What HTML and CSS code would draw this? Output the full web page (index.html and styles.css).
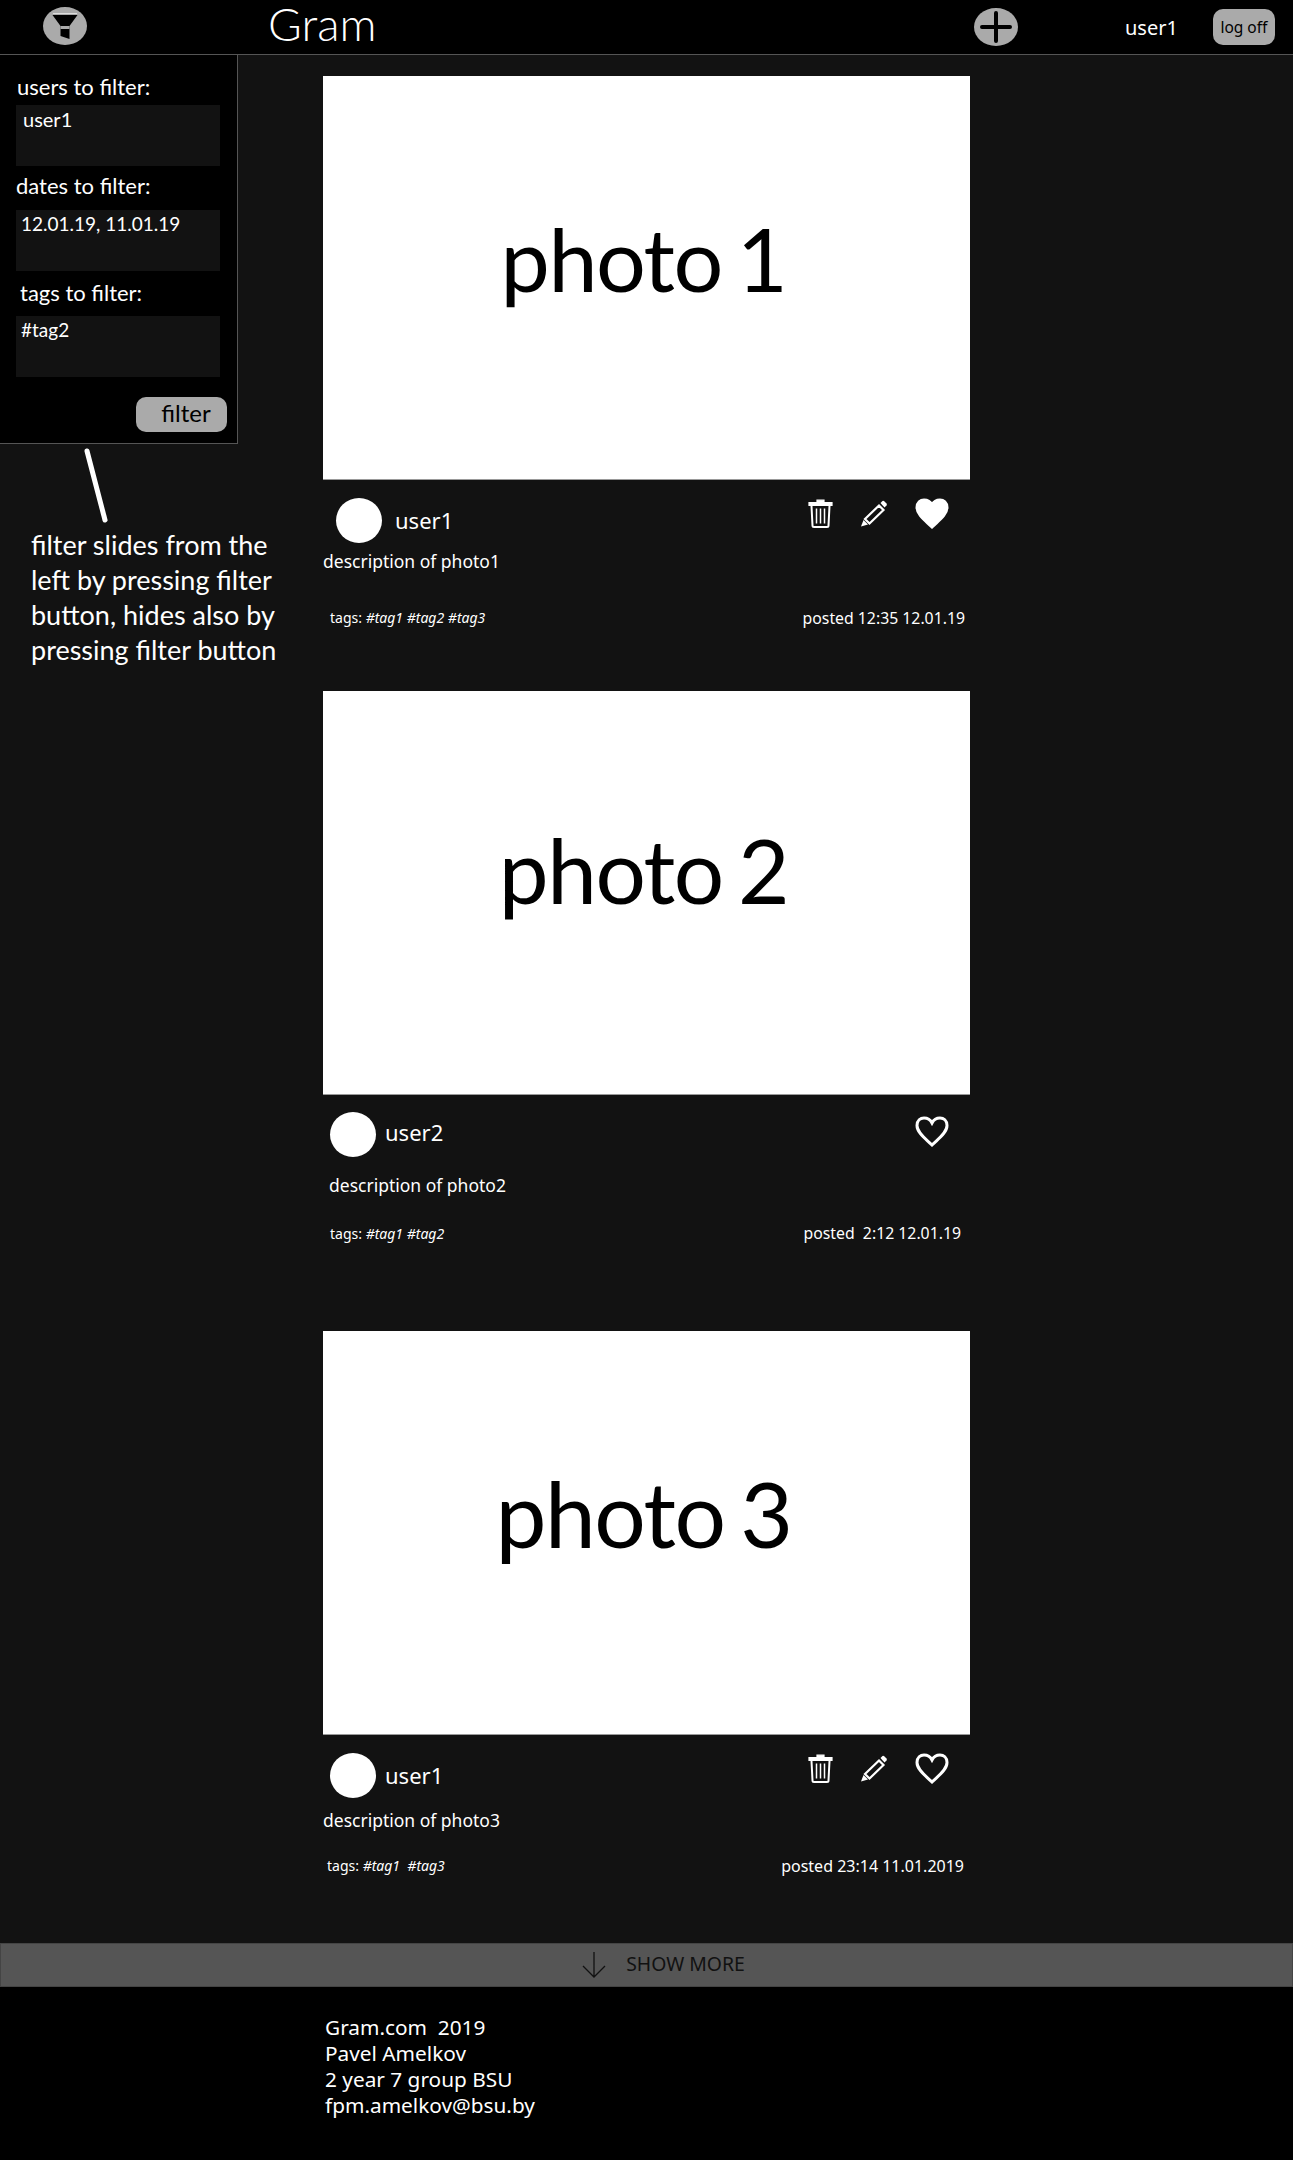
FILE: index.html
```html
<!DOCTYPE html>
<html lang="en">
<head>
  <meta charset="UTF-8" />
  <meta name="viewport" content="width=device-width, initial-scale=1.0" />
  <title>Gram</title>
  <link rel="stylesheet" href="styles.css">
</head>
<body>
  <svg class="sprites" width="0" height="0">
    <symbol id="trash" viewBox="0 0 25 29">
      <path d="M9 3V1.200h7V3M1 3.500h23v3H1z" fill="#fff" stroke="#fff" stroke-width="1.200" />
      <path d="M3.500 7l1 19.500q0 1.500 1.500 1.500h13q1.500 0 1.500-1.500l1-19.500" fill="none" stroke="#fff" stroke-width="2" />
      <path d="M8.500 9.500v15M12.500 9.500v15M16.500 9.500v15" fill="none" stroke="#fff" stroke-width="1.500" />
    </symbol>
    <symbol id="pencil" viewBox="0 0 28 27">
      <path d="M20.500 3l2-2q1-.5 2 .5l2 2q.8 1 0 2l-2 2z" fill="#fff" />
      <path d="M19 5.500l4.500 4.500L9.500 23.500 5 19z" fill="none" stroke="#fff" stroke-width="2.200" />
      <path d="M3.500 20l4.500 4.500L1 26.500z" fill="#fff" />
    </symbol>
    <symbol id="heart" viewBox="0 0 34 31">
      <path d="M17 29C11 23 2 17 2 9.500 2 4.500 5.500 2 9 2c3.500 0 6.500 2 8 5 1.500-3 4.500-5 8-5 3.500 0 7 2.500 7 7.500C32 17 23 23 17 29z" />
    </symbol>
  </svg>

  <header class="topbar">
    <button class="round-btn filter-toggle">
      <svg width="44" height="38" viewBox="0 0 44 38">
        <path d="M10 6.500h24" stroke="#ddd" stroke-width="1" />
        <path d="M9.500 8h25L26.500 19v13l-9-3V19z" fill="#000" />
        <path d="M17.500 19h9v3h-9z" fill="#aaa" />
      </svg>
    </button>
    <span class="logo">Gram</span>
    <button class="round-btn add-btn">
      <svg width="44" height="38" viewBox="0 0 44 38">
        <path d="M22 5v28M8 19h28" stroke="#000" stroke-width="4" stroke-linecap="round" />
      </svg>
    </button>
    <span class="current-user">user1</span>
    <button class="logoff-btn">log off</button>
  </header>

  <aside class="filter-side">
    <div class="filter-panel">
      <label class="filter-label">users to filter:</label>
      <div class="filter-input filter-input-users">user1</div>
      <label class="filter-label filter-label-dates">dates to filter:</label>
      <div class="filter-input filter-input-dates">12.01.19, 11.01.19</div>
      <label class="filter-label filter-label-tags">tags to filter:</label>
      <div class="filter-input filter-input-tags">#tag2</div>
      <button class="filter-submit">filter</button>
    </div>
    <svg class="note-line" width="30" height="80" viewBox="0 0 30 80">
      <path d="M7 3l18 69" stroke="#fff" stroke-width="5" stroke-linecap="round" />
    </svg>
    <p class="note">filter slides from the left by pressing filter button, hides also by pressing filter button</p>
  </aside>

  <main class="feed">
    <article class="post post-first">
      <div class="photo">photo 1</div>
      <div class="post-head">
        <div class="post-user"><span class="avatar"></span><span class="username">user1</span></div>
        <div class="actions">
          <svg class="icon-trash"><use href="#trash" /></svg>
          <svg class="icon-pencil"><use href="#pencil" /></svg>
          <svg class="icon-heart liked"><use href="#heart" /></svg>
        </div>
      </div>
      <p class="description">description of photo1</p>
      <div class="post-foot">
        <span class="tags">tags: <i>#tag1 #tag2 #tag3</i></span>
        <span class="posted">posted 12:35 12.01.19</span>
      </div>
    </article>

    <article class="post post-second">
      <div class="photo">photo 2</div>
      <div class="post-head">
        <div class="post-user"><span class="avatar"></span><span class="username">user2</span></div>
        <div class="actions">
          <svg class="icon-heart"><use href="#heart" /></svg>
        </div>
      </div>
      <p class="description">description of photo2</p>
      <div class="post-foot">
        <span class="tags">tags: <i>#tag1 #tag2</i></span>
        <span class="posted">posted &nbsp;2:12 12.01.19</span>
      </div>
    </article>

    <article class="post post-third">
      <div class="photo">photo 3</div>
      <div class="post-head">
        <div class="post-user"><span class="avatar"></span><span class="username">user1</span></div>
        <div class="actions">
          <svg class="icon-trash"><use href="#trash" /></svg>
          <svg class="icon-pencil"><use href="#pencil" /></svg>
          <svg class="icon-heart"><use href="#heart" /></svg>
        </div>
      </div>
      <p class="description">description of photo3</p>
      <div class="post-foot">
        <span class="tags">tags: <i>#tag1 &nbsp;#tag3</i></span>
        <span class="posted">posted 23:14 11.01.2019</span>
      </div>
    </article>
  </main>

  <button class="show-more">
    <svg width="26" height="28" viewBox="0 0 26 28">
      <path d="M13 1v25M2 15l11 11 11-11" fill="none" stroke="#111" stroke-width="1.300" />
    </svg>
    <span class="show-more-text">SHOW MORE</span>
  </button>

  <footer class="footer">
    <div>Gram.com &nbsp;2019</div>
    <div>Pavel Amelkov</div>
    <div>2 year 7 group BSU</div>
    <div>fpm.amelkov@bsu.by</div>
  </footer>
</body>
</html>
```

FILE: styles.css
```css
* {
  box-sizing: border-box;
}
body {
  margin: 0;
  min-height: 2160px;
  display: flex;
  flex-direction: column;
  position: relative;
  font-family: "Noto Sans", sans-serif;
  background-color: #121212;
  color: #fff;
}
button {
  font-family: inherit;
  border: none;
  padding: 0;
}
.sprites {
  position: absolute;
}

.topbar {
  height: 55px;
  display: flex;
  align-items: center;
  background-color: #000;
  border-bottom: 1px solid #555;
}
.round-btn {
  width: 44px;
  height: 38px;
  border-radius: 50%;
  background-color: #aaa;
  display: flex;
}
.filter-toggle {
  margin-left: 43px;
  margin-top: -3px;
}
.logo {
  width: 110px;
  margin-left: 181px;
  font-family: Lato, sans-serif;
  font-weight: 300;
  font-size: 46px;
  line-height: 46px;
  margin-top: -7px;
}
.add-btn {
  margin-left: 596px;
  margin-top: -1px;
}
.current-user {
  margin-left: 107px;
  font-size: 20px;
}
.logoff-btn {
  margin-left: 35px;
  width: 62px;
  height: 36px;
  border-radius: 10px;
  background-color: #aaa;
  color: #000;
  font-size: 15.500px;
}

.filter-side {
  position: absolute;
  left: 0;
  top: 55px;
  width: 290px;
  font-family: Lato, sans-serif;
}
.filter-panel {
  width: 238px;
  height: 389px;
  padding: 18px 10px 0 16px;
  background-color: #000;
  border-right: 1px solid #555;
  border-bottom: 1px solid #555;
  display: flex;
  flex-direction: column;
}
.filter-label {
  font-size: 22px;
  line-height: 28px;
  margin-left: 1px;
}
.filter-label-dates {
  margin: 6px 0 10px;
}
.filter-label-tags {
  margin: 8px 0 9px 4px;
}
.filter-input {
  width: 204px;
  height: 61px;
  padding: 1px 6px;
  background-color: #121212;
  font-size: 19px;
  line-height: 26px;
}
.filter-input-users {
  margin-top: 4px;
  padding-left: 7px;
  font-size: 20px;
}
.filter-input-dates {
  padding-left: 5px;
}
.filter-input-tags {
  padding-left: 5px;
}
.filter-submit {
  align-self: flex-end;
  margin-top: 20px;
  width: 91px;
  height: 35px;
  padding: 0 0 4px 9px;
  border-radius: 10px;
  background-color: #aaa;
  color: #000;
  font-family: Lato, sans-serif;
  font-size: 24px;
}
.note-line {
  display: block;
  margin: 4px 0 0 80px;
}
.note {
  margin: -1px 0 0 31px;
  width: 255px;
  font-size: 27px;
  line-height: 35px;
}

.feed {
  margin-left: 323px;
  width: 647px;
  padding-top: 21px;
}
.photo {
  height: 404px;
  padding: 0 6px 40px 0;
  display: flex;
  align-items: center;
  justify-content: center;
  background-color: #fff;
  border-bottom: 1px solid #999;
  color: #000;
  font-family: Lato, sans-serif;
  font-size: 88px;
  letter-spacing: -1.500px;
  word-spacing: -6px;
}
.post-head {
  display: flex;
  justify-content: space-between;
  align-items: flex-start;
  padding-right: 21px;
  margin-top: 18px;
}
.post-user {
  display: flex;
  align-items: center;
  gap: 9px;
  padding-left: 7px;
}
.avatar {
  width: 46px;
  height: 45px;
  border-radius: 50%;
  background-color: #fff;
}
.username {
  margin-top: -2px;
  font-size: 22px;
}
.actions {
  display: flex;
  align-items: center;
  gap: 27px;
}
.actions svg {
  display: block;
}
.icon-trash {
  width: 25px;
  height: 29px;
}
.icon-pencil {
  width: 28px;
  height: 27px;
}
.icon-heart {
  width: 34px;
  height: 31px;
  fill: none;
  stroke: #fff;
  stroke-width: 3;
}
.icon-heart.liked {
  fill: #fff;
}
.description {
  margin: 6px 0 0;
  font-size: 17.500px;
  line-height: 24px;
}
.post-foot {
  display: flex;
  justify-content: space-between;
  align-items: center;
  line-height: 20px;
  font-size: 15.800px;
}
.tags {
  font-size: 14px;
}

.post-first .post-user {
  padding-left: 13px;
  gap: 13px;
}
.post-first .post-foot {
  margin-top: 35px;
  padding: 0 5px 0 7px;
}
.post-second {
  margin-top: 63px;
}
.post-second .photo {
  padding-bottom: 46px;
  font-size: 89px;
}
.post-second .post-head {
  margin-top: 17px;
}
.post-second .username {
  margin-top: -6px;
}
.post-second .actions {
  margin-top: 4px;
}
.post-second .description {
  margin-top: 16px;
  padding-left: 6px;
}
.post-second .post-foot {
  margin-top: 27px;
  padding: 0 9px 0 7px;
}
.post-second .posted {
  margin-top: -2px;
}
.post-third {
  margin-top: 87px;
}
.post-third .photo {
  font-size: 91px;
}
.post-third .description {
  margin-top: 10px;
}
.post-third .post-foot {
  margin-top: 24px;
  padding: 0 6px 0 4px;
}
.post-third .posted {
  margin-top: -1px;
  font-size: 16px;
}

.show-more {
  margin-top: 67px;
  height: 44px;
  display: flex;
  align-items: center;
  justify-content: center;
  gap: 19px;
  padding-left: 33px;
  background-color: #555;
  border: 1px solid #444;
  color: #111;
  font-size: 19.400px;
}
.show-more-text {
  margin-top: -3px;
}
.footer {
  flex-grow: 1;
  padding: 27px 0 0 325px;
  background-color: #000;
  font-size: 20.800px;
  line-height: 26px;
}
```
